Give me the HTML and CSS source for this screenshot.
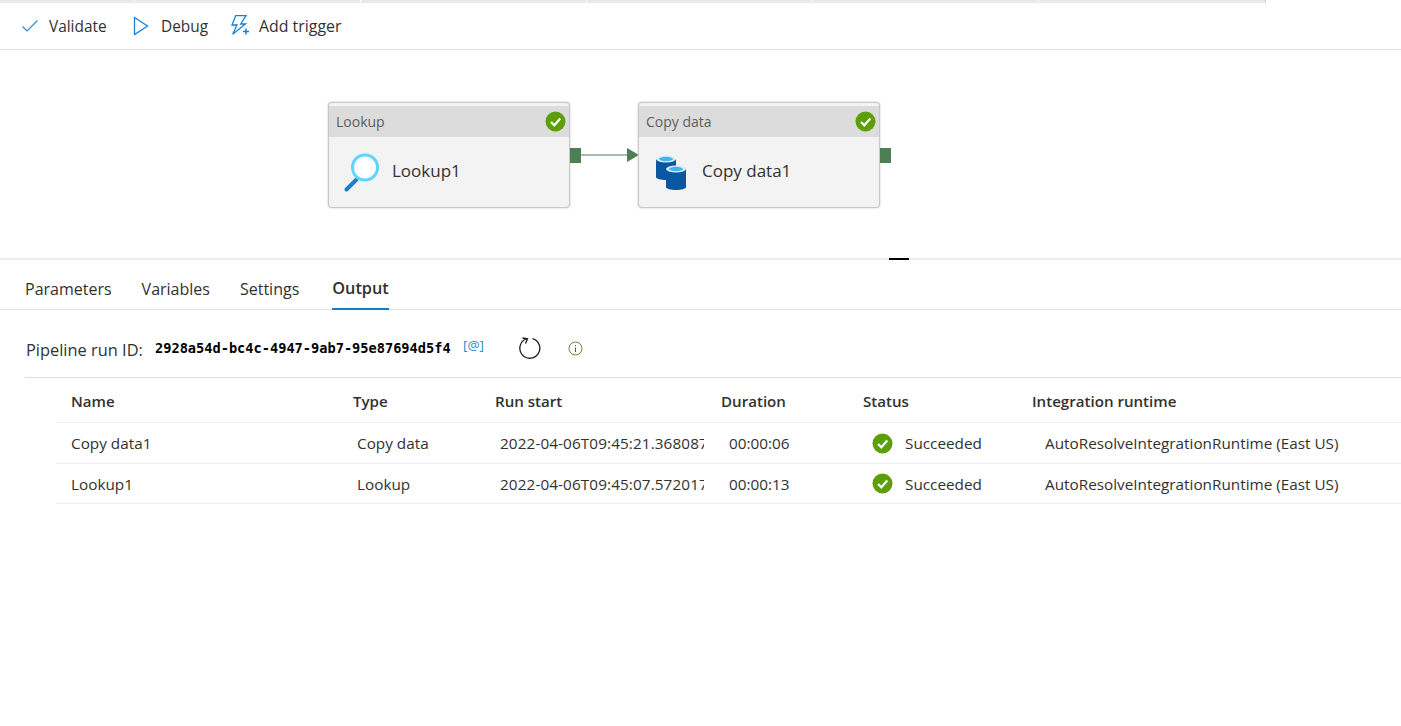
FILE: index.html
```html
<!DOCTYPE html>
<html lang="en">
<head>
    <meta charset="UTF-8">
    <meta name="viewport" content="width=device-width, initial-scale=1.0">
    <title>Pipeline run</title>
    <link rel="stylesheet" href="styles.css">
</head>
<body>

<!-- Tab strip, cut off by the top of the picture -->
<div class="top-strip">
    <div class="strip-tab strip-first"></div>
    <div class="strip-tab"></div>
    <div class="strip-tab"></div>
    <div class="strip-tab"></div>
    <div class="strip-tab"></div>
    <div class="strip-tab strip-last"></div>
</div>

<div class="toolbar">
    <div class="tool tool-validate">
        <svg class="tool-icon" width="18" height="18" viewBox="0 0 18 18"><path d="M1.5 9.5 L6 14 L16.5 3.5" fill="none" stroke="#2b88d8" stroke-width="1.2"/></svg>
        <span>Validate</span>
    </div>
    <div class="tool tool-debug">
        <svg class="tool-icon" width="18" height="20" viewBox="0 0 18 20"><path d="M2.5 1.5 L15.5 10 L2.5 18.5 Z" fill="none" stroke="#1a80cf" stroke-width="1.3"/></svg>
        <span>Debug</span>
    </div>
    <div class="tool tool-trigger">
        <svg class="tool-icon" width="20" height="22" viewBox="0 0 20 22"><path d="M5.700 .7 H16 L10.700 9 H15.500 L2.700 19.300 L7 10 H2 Z" fill="none" stroke="#1a80cf" stroke-width="1.3"/><path d="M16 13.500 V19.500 M13 16.500 H19" stroke="#1a80cf" stroke-width="1.5"/></svg>
        <span>Add trigger</span>
    </div>
</div>

<div class="canvas">
    <div class="node node-lookup">
        <div class="node-head">
            <span>Lookup</span>
            <svg class="ok-icon" width="21" height="21" viewBox="0 0 21 21"><circle cx="10.5" cy="10.5" r="10" fill="#5c9e06"/><path d="M6 11 L9.3 14.3 L15.3 7.5" fill="none" stroke="#fff" stroke-width="2.2"/></svg>
        </div>
        <div class="node-body">
            <svg class="node-icon" width="38" height="42" viewBox="0 0 38 42"><path d="M4.500 39.500 L14 30" stroke="#1f7fc4" stroke-width="4" stroke-linecap="round"/><circle cx="23" cy="17.500" r="12.500" fill="#fff" stroke="#5fd5fb" stroke-width="3"/></svg>
            <span>Lookup1</span>
        </div>
        <div class="port"></div>
    </div>

    <svg class="link" width="58" height="14" viewBox="0 0 58 14"><path d="M0 7 H47" stroke="#4d7f55" stroke-width="1"/><path d="M46 0 L58 7 L46 14 Z" fill="#4d7f55"/></svg>

    <div class="node node-copy">
        <div class="node-head">
            <span>Copy data</span>
            <svg class="ok-icon" width="21" height="21" viewBox="0 0 21 21"><circle cx="10.5" cy="10.5" r="10" fill="#5c9e06"/><path d="M6 11 L9.3 14.3 L15.3 7.5" fill="none" stroke="#fff" stroke-width="2.2"/></svg>
        </div>
        <div class="node-body">
            <svg class="node-icon" width="38" height="42" viewBox="0 0 38 42">
                <path d="M4 9 V27 C4 31 24 31 24 27 V9 Z" fill="#0a56a3"/>
                <ellipse cx="14" cy="9" rx="10" ry="3.500" fill="#d9eef9"/>
                <ellipse cx="14" cy="9" rx="7" ry="2.200" fill="#3fb5ec"/>
                <path d="M14 19 V37 C14 41 34 41 34 37 V19 Z" fill="#0a56a3"/>
                <ellipse cx="24" cy="19" rx="10" ry="3.500" fill="#d9eef9"/>
                <ellipse cx="24" cy="19" rx="7" ry="2.200" fill="#3fb5ec"/>
            </svg>
            <span>Copy data1</span>
        </div>
        <div class="port"></div>
    </div>
</div>

<div class="splitter"><div class="grip"></div></div>

<div class="tabs">
    <div class="tab">Parameters</div>
    <div class="tab">Variables</div>
    <div class="tab">Settings</div>
    <div class="tab tab-active">Output</div>
</div>

<div class="run-row">
    <span class="run-label">Pipeline run ID:</span>
    <span class="run-id">2928a54d-bc4c-4947-9ab7-95e87694d5f4</span>
    <span class="copy-link">[@]</span>
    <svg class="refresh-icon" width="22" height="22" viewBox="0 0 22 22"><path d="M13.500 1.600 A10 10 0 1 1 7 2" fill="none" stroke="#1b1b1b" stroke-width="1.300"/><path d="M3.500 1 L8.500 1.800 L6.500 6.500" fill="none" stroke="#1b1b1b" stroke-width="1.300"/></svg>
    <svg class="info-icon" width="15" height="15" viewBox="0 0 15 15"><circle cx="7.500" cy="7.500" r="6.500" fill="none" stroke="#8a7a3a" stroke-width="1"/><path d="M7.500 6.500 V11 M7.500 4 V5.200" stroke="#555" stroke-width="1"/></svg>
</div>

<div class="runs">
    <div class="runs-row runs-head">
        <div>Name</div>
        <div>Type</div>
        <div>Run start</div>
        <div>Duration</div>
        <div>Status</div>
        <div>Integration runtime</div>
    </div>
    <div class="runs-row">
        <div>Copy data1</div>
        <div class="cell-type">Copy data</div>
        <div class="cell-start">2022-04-06T09:45:21.368087</div>
        <div class="cell-duration">00:00:06</div>
        <div class="cell-status">
            <svg width="21" height="21" viewBox="0 0 21 21"><circle cx="10.5" cy="10.5" r="10" fill="#5c9e06"/><path d="M6 11 L9.3 14.3 L15.3 7.5" fill="none" stroke="#fff" stroke-width="2.2"/></svg>
            <span>Succeeded</span>
        </div>
        <div class="cell-runtime">AutoResolveIntegrationRuntime (East US)</div>
    </div>
    <div class="runs-row">
        <div>Lookup1</div>
        <div class="cell-type">Lookup</div>
        <div class="cell-start">2022-04-06T09:45:07.572017</div>
        <div class="cell-duration">00:00:13</div>
        <div class="cell-status">
            <svg width="21" height="21" viewBox="0 0 21 21"><circle cx="10.5" cy="10.5" r="10" fill="#5c9e06"/><path d="M6 11 L9.3 14.3 L15.3 7.5" fill="none" stroke="#fff" stroke-width="2.2"/></svg>
            <span>Succeeded</span>
        </div>
        <div class="cell-runtime">AutoResolveIntegrationRuntime (East US)</div>
    </div>
</div>

</body>
</html>
```

FILE: styles.css
```css
body {
    margin: 0;
    background: #fff;
    color: #323130;
    font-family: "Open Sans", "Noto Sans", sans-serif;
    font-size: 14px;
    overflow: hidden;
}

.top-strip {
    display: flex;
    width: 1266px;
    height: 3px;
}

.strip-tab {
    width: 226px;
    background: #e8e8e8;
    border-right: 1px solid #fff;
    box-sizing: border-box;
}

.strip-first {
    width: 135px;
}

.strip-last {
    flex: 1;
    border-right: 1px solid #ccc;
}

.toolbar {
    display: flex;
    align-items: center;
    height: 46px;
    border-bottom: 1px solid #e0e0e0;
    padding-left: 21px;
    font-size: 15.400px;
}

.tool {
    display: flex;
    align-items: center;
}

.tool-icon {
    flex: none;
}

.tool-validate {
    width: 111px;
}

.tool-validate span {
    margin-left: 10px;
}

.tool-debug {
    width: 98px;
}

.tool-debug span {
    margin-left: 11px;
}

.tool-trigger span {
    margin-left: 9px;
    font-size: 15.900px;
}

/* Pipeline canvas: nodes sit at their own place on it */
.canvas {
    position: relative;
    height: 208px;
}

.node {
    position: absolute;
    top: 52px;
    width: 242px;
    height: 106px;
    box-sizing: border-box;
    border: 1px solid #c8c8c8;
    border-radius: 4px;
    background: #f3f3f3;
    box-shadow: 0 0 2px #bbb;
}

.node-lookup {
    left: 328px;
}

.node-copy {
    left: 638px;
}

.node-head {
    display: flex;
    align-items: center;
    justify-content: space-between;
    height: 31px;
    margin-top: 3px;
    padding: 0 3px 0 7px;
    background: #dcdcdc;
    color: #5e5e5e;
    font-size: 14px;
}

.node-body {
    display: flex;
    align-items: center;
    height: 67px;
    padding-left: 13px;
    color: #323130;
    font-size: 17px;
}

.node-icon {
    margin-right: 12px;
}

.port {
    position: absolute;
    right: -12px;
    top: 45px;
    width: 11px;
    height: 15px;
    background: #4d7f55;
}

.link {
    position: absolute;
    left: 581px;
    top: 98px;
}

.splitter {
    position: relative;
    height: 2px;
    background: #ececec;
}

.grip {
    position: absolute;
    left: 889px;
    top: 0;
    width: 20px;
    height: 2px;
    background: #000;
}

.tabs {
    display: flex;
    height: 49px;
    padding-left: 25px;
    border-bottom: 1px solid #e0e0e0;
    font-size: 16px;
}

.tab {
    display: flex;
    align-items: center;
    margin-right: 30px;
    padding-top: 10px;
    padding-bottom: 2px;
    box-sizing: border-box;
    height: 50px;
}

.tab-active {
    margin-left: 3px;
    font-size: 16.300px;
    font-weight: 600;
    border-bottom: 2px solid #0f7fc8;
}

.run-row {
    display: flex;
    align-items: center;
    height: 68px;
    margin-left: 25px;
    border-bottom: 1px solid #dcdcdc;
    padding-top: 9px;
    box-sizing: border-box;
}

.run-label {
    width: 129px;
    margin-left: 1px;
    margin-top: 3px;
    font-size: 16.400px;
    white-space: nowrap;
}

.run-id {
    width: 308px;
    color: #000;
    font-family: "DejaVu Sans Mono", monospace;
    font-size: 13.650px;
    font-weight: 700;
}

.copy-link {
    width: 56px;
    margin-top: -6px;
    color: #2b88d8;
    font-size: 13.500px;
}

.refresh-icon {
    margin-right: 27px;
}

.runs {
    margin-left: 56px;
}

.runs-row {
    display: grid;
    grid-template-columns: 282px 142px 226px 142px 169px 1fr;
    align-items: center;
    height: 40px;
    border-bottom: 1px solid #eeeeee;
    font-size: 15.300px;
}

.runs-row:last-child {
    height: 39px;
}

.runs-row > div {
    padding-left: 15px;
    box-sizing: border-box;
    white-space: nowrap;
}

.runs-head {
    height: 45px;
    padding-top: 1px;
    box-sizing: border-box;
    font-size: 15.100px;
    font-weight: 600;
}

.runs-row > .cell-type {
    padding-left: 19px;
}

.runs-row > .cell-start {
    margin-right: 2px;
    padding-left: 20px;
    letter-spacing: 0.1px;
    overflow: hidden;
}

.runs-row > .cell-duration {
    padding-left: 23px;
}

.runs-row > .cell-status {
    display: flex;
    align-items: center;
    padding-left: 24px;
}

.cell-status span {
    margin-left: 12px;
}

.runs-row > .cell-runtime {
    padding-left: 28px;
}
```
